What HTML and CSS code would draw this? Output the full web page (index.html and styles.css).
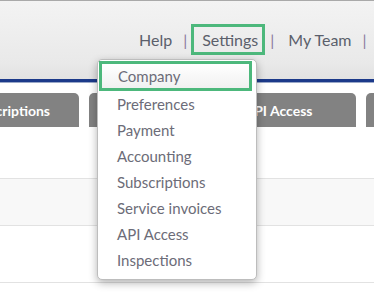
FILE: index.html
```html
<!DOCTYPE html>
<html lang="en">
<head>
    <meta charset="UTF-8">
    <title>Settings</title>
    <link rel="stylesheet" href="styles.css">
</head>
<body>
    <div class="header">
        <nav class="top-nav">
            <a class="nav-link">Help</a>
            <span class="sep">|</span>
            <a class="nav-link nav-active">Settings</a>
            <span class="sep">|</span>
            <a class="nav-link">My Team</a>
            <span class="sep">|</span>
        </nav>
    </div>
    <div class="blue-bar"></div>
    <div class="tabs">
        <div class="tab tab-first">Subscriptions</div>
        <div class="tab tab-second"></div>
        <div class="tab tab-third">API Access</div>
        <div class="tab tab-fourth"></div>
    </div>
    <div class="rows">
        <div class="row"></div>
        <div class="row row-alt"></div>
        <div class="row"></div>
    </div>

    <ul class="dropdown">
        <li class="item item-active">Company</li>
        <li class="item">Preferences</li>
        <li class="item">Payment</li>
        <li class="item">Accounting</li>
        <li class="item">Subscriptions</li>
        <li class="item">Service invoices</li>
        <li class="item">API Access</li>
        <li class="item">Inspections</li>
    </ul>
</body>
</html>
```

FILE: styles.css
```css
body {
    margin: 0;
    width: 374px;
    height: 303px;
    overflow: hidden;
    font-family: Lato, "Open Sans", sans-serif;
    background: #fff;
    position: relative;
}
.header {
    height: 78px;
    border-top: 1px solid #a9a9a9;
    background: linear-gradient(#f3f3f3, #e9e9e9 80%, #e2e2e2);
    display: flex;
    align-items: flex-start;
}
.top-nav {
    display: flex;
    align-items: center;
    white-space: nowrap;
    padding-left: 139px;
    margin-top: 23px;
    font-size: 16px;
    color: #5b5f6b;
}
.nav-link {
    padding: 6px 0;
}
.nav-active {
    border: 3px solid #4db87c;
    padding: 3px 4px 3px 8px;
}
.sep {
    color: #8a7a9c;
    margin: 0 0 0 11px;
}
.top-nav .sep:nth-child(2) {
    margin: 0 4px 0 11px;
}
.top-nav .sep:nth-child(4) {
    margin: 0 14px 0 5px;
}
.blue-bar {
    height: 3px;
    background: #1c3a8a;
    border-bottom: 1px solid #9aa8c8;
}
.tabs {
    display: flex;
    gap: 10px;
    margin-top: 10px;
    margin-left: -53px;
    height: 34px;
}
.tab {
    flex: none;
    background: #828282;
    color: #fff;
    font-weight: bold;
    font-size: 14px;
    border-radius: 5px 5px 0 0;
    display: flex;
    align-items: center;
    justify-content: center;
}
.tab-first {
    width: 122px;
    padding-right: 10px;
}
.tab-second {
    width: 102px;
}
.tab-third {
    width: 155px;
}
.tab-fourth {
    width: 120px;
}
.row {
    height: 51px;
    border-bottom: 1px solid #e2e2e2;
}
.row-alt {
    height: 46px;
    background: #f8f8f8;
}
.row:last-child {
    height: 56px;
}
.dropdown {
    position: absolute;
    left: 97px;
    top: 59px;
    width: 158px;
    margin: 0;
    padding: 1px 0 6px;
    list-style: none;
    background: #fff;
    border: 1px solid #bdbdbd;
    border-radius: 5px;
    box-shadow: 0 3px 8px rgba(0, 0, 0, 0.3);
    font-size: 15px;
    color: #6c6c78;
}
.item {
    height: 26px;
    line-height: 26px;
    padding-left: 19px;
}
.item-active {
    height: 24px;
    line-height: 24px;
    margin: 0 4px 0 1px;
    padding-left: 16px;
    border: 3px solid #4db87c;
    background: linear-gradient(#ffffff, #f1f1f1);
}
```
